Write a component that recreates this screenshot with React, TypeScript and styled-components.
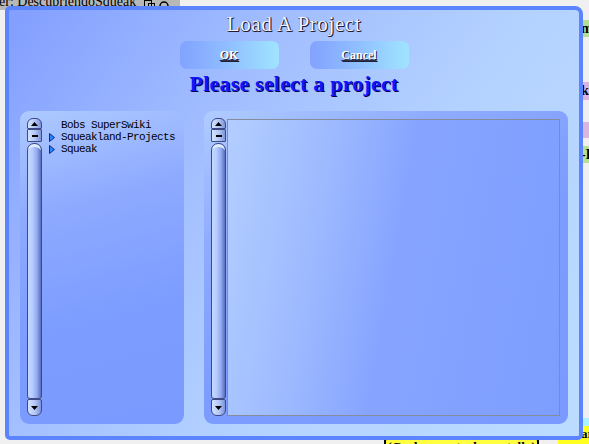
import styled, { createGlobalStyle } from "styled-components";

const GlobalStyle = createGlobalStyle`
  html, body {
    margin: 0;
    padding: 0;
    background: #f0f0f0;
  }
  #root {
    width: 589px;
    height: 444px;
  }
`;

const Desktop = styled.div`
  position: relative;
  width: 589px;
  height: 444px;
  overflow: hidden;
  background: #f0f0f0;
  font-family: "Liberation Serif", serif;
`;

// morphs lying behind the dialog on the Squeak desktop
const BackWindowBar = styled.div`
  position: absolute;
  left: 0;
  top: 0;
  width: 180px;
  height: 10px;
  background: #b8b8b8;
  overflow: hidden;
  display: flex;
  align-items: flex-start;
  gap: 8px;
`;
const BackWindowTitle = styled.span`
  margin-top: -5px;
  margin-left: -1px;
  font-size: 14px;
  line-height: 14px;
  color: #000;
  white-space: nowrap;
`;
const BarIcons = styled.span`
  display: flex;
  gap: 4px;
`;

const Flap = styled.div<{ $top: number; $height: number; $color: string }>`
  position: absolute;
  left: 576px;
  top: ${(p) => p.$top}px;
  width: 30px;
  height: ${(p) => p.$height}px;
  background: ${(p) => p.$color};
  font-size: 14px;
  font-weight: bold;
  line-height: ${(p) => p.$height}px;
  color: #000;
  padding-left: 5px;
  box-sizing: border-box;
  white-space: nowrap;
`;

const YellowLabel = styled.div`
  position: absolute;
  left: 384px;
  top: 437px;
  width: 155px;
  height: 20px;
  box-sizing: border-box;
  border: 2px solid #000;
  border-radius: 4px;
  background: #ffff40;
  font-size: 13px;
  font-weight: bold;
  line-height: 14px;
  padding-top: 1px;
  text-align: center;
  white-space: nowrap;
`;
const CyanBlob = styled.div`
  position: absolute;
  left: 556px;
  top: 418px;
  width: 40px;
  height: 16px;
  border-radius: 7px;
  background: #a8f4ff;
`;
const CornerYellow = styled.div`
  position: absolute;
  left: 558px;
  top: 426px;
  width: 40px;
  height: 24px;
  border-radius: 6px 0 0 0;
  background: #ffff20;
  font-size: 13px;
  font-weight: bold;
  line-height: 16px;
  padding-left: 23px;
  box-sizing: border-box;
`;

// the dialog
const Dialog = styled.div`
  position: absolute;
  left: 5px;
  top: 6px;
  width: 578px;
  height: 434px;
  box-sizing: border-box;
  border: 4px solid #5c84ff;
  border-radius: 5px 8px 5px 5px;
  background: linear-gradient(125deg, #829eff 0%, #a0bcff 30%, #b4d2ff 60%, #bcdcff 100%);
  display: flex;
  flex-direction: column;
  align-items: center;
  z-index: 2;
`;

const Title = styled.div`
  margin-top: 2px;
  height: 24px;
  line-height: 24px;
  font-family: "Liberation Serif", serif;
  font-size: 21px;
  letter-spacing: 0.6px;
  color: #f4f6ff;
  text-shadow: 1px 1px 0 #1c1c34, 1px 0 0 #3a3a5c, 0 1px 0 #3a3a5c;
`;

const ButtonRow = styled.div`
  display: flex;
  gap: 31px;
  margin-top: 5px;
`;

const DialogButton = styled.div`
  width: 99px;
  height: 28px;
  border-radius: 7px;
  background: linear-gradient(90deg, #82a2ff 0%, #90c0ff 50%, #a0e4ff 100%);
  display: flex;
  align-items: center;
  justify-content: center;
  font-family: "Liberation Serif", serif;
  font-size: 12px;
  font-weight: bold;
  color: #ffffff;
  text-decoration: underline;
  text-decoration-color: #30304a;
  text-underline-offset: 1px;
  text-shadow: 1px 1px 0 #20203a;
`;

const Heading = styled.div`
  margin-top: 3px;
  height: 24px;
  line-height: 24px;
  font-family: "Liberation Serif", serif;
  font-size: 22px;
  font-weight: bold;
  letter-spacing: 0.2px;
  color: #1414ff;
  text-shadow: 1px 1px 0 #000050;
`;

const Panels = styled.div`
  align-self: stretch;
  flex: 1;
  display: flex;
  gap: 20px;
  margin-top: 15px;
  padding: 0 11px 12px 11px;
`;

const Panel = styled.div<{ $wide?: boolean }>`
  ${(p) => (p.$wide ? "flex: 1;" : "width: 164px;")}
  border-radius: 9px;
  box-sizing: border-box;
  display: flex;
  padding: ${(p) => (p.$wide ? "7px 8px 8px 7px" : "7px 7px 8px 7px")};
  background: ${(p) =>
    p.$wide
      ? "linear-gradient(150deg, #b0ccff 0%, #90acff 25%, #7c9cff 55%, #7a9aff 100%)"
      : "linear-gradient(165deg, #aecaff 0%, #8eaaff 30%, #7c9cff 65%, #7a9aff 100%)"};
`;

// scrollbar
const Scroll = styled.div`
  width: 15px;
  display: flex;
  flex-direction: column;
`;
const ScrollButton = styled.div<{ $h: number; $round: string }>`
  height: ${(p) => p.$h}px;
  box-sizing: border-box;
  border: 1px solid #3e4a84;
  border-radius: ${(p) => p.$round};
  background: linear-gradient(90deg, #d4e4ff 0%, #b0c6f6 55%, #7e92d8 100%);
  display: flex;
  align-items: center;
  justify-content: center;
`;
const ScrollTrack = styled.div`
  flex: 1;
  box-sizing: border-box;
  margin-top: 1px;
  border: 1px solid #3e4a84;
  border-radius: 7px 7px 3px 3px;
  background: linear-gradient(90deg, #c4d8ff 0%, #b6ccff 35%, #90a8f0 70%, #5a6cb8 100%);
  box-shadow: inset 0 4px 0 -1px #e0ecff;
`;

function Scrollbar() {
  return (
    <Scroll>
      <ScrollButton $h={11} $round="6px 6px 1px 1px">
        <svg width="7" height="4" viewBox="0 0 7 4">
          <polygon points="3.5,0 7,4 0,4" fill="#000" />
        </svg>
      </ScrollButton>
      <ScrollButton $h={13} $round="1px">
        <svg width="6" height="2" viewBox="0 0 6 2">
          <rect width="6" height="2" fill="#000" />
        </svg>
      </ScrollButton>
      <ScrollTrack />
      <ScrollButton $h={17} $round="2px 2px 6px 6px">
        <svg width="7" height="4" viewBox="0 0 7 4">
          <polygon points="0,0 7,0 3.5,4" fill="#000" />
        </svg>
      </ScrollButton>
    </Scroll>
  );
}

const List = styled.div`
  flex: 1;
  padding: 1px 0 0 7px;
  display: flex;
  flex-direction: column;
`;
const ListRow = styled.div`
  height: 12px;
  display: flex;
  align-items: center;
  font-family: "Liberation Mono", monospace;
  font-size: 11px;
  letter-spacing: -0.6px;
  color: #000;
  white-space: nowrap;
`;
const Arrow = styled.span`
  width: 12px;
  display: flex;
  align-items: center;
`;

const ContentBox = styled.div`
  flex: 1;
  margin: 1px 0 0 1px;
  border: 1px solid #858c9c;
  background: linear-gradient(100deg, #b2ceff 0%, #a0bcff 25%, #86a4ff 50%, #7e9eff 100%);
`;

const entries = [
  { name: "Bobs SuperSwiki", expandable: false },
  { name: "Squeakland-Projects", expandable: true },
  { name: "Squeak", expandable: true },
];

export default function App() {
  return (
    <>
      <GlobalStyle />
      <Desktop>
        <BackWindowBar>
          <BackWindowTitle>er: DescubriendoSqueak</BackWindowTitle>
          <BarIcons>
            <svg width="11" height="10" viewBox="0 0 11 10">
              <rect x="0.5" y="0.5" width="7" height="7" fill="none" stroke="#000" />
              <rect x="4.5" y="3.5" width="6" height="6" fill="none" stroke="#000" />
            </svg>
            <svg width="10" height="10" viewBox="0 0 10 10">
              <circle cx="5" cy="6" r="4" fill="none" stroke="#000" strokeWidth="1.5" />
            </svg>
          </BarIcons>
        </BackWindowBar>

        <Flap $top={20} $height={17} $color="#b4e094">mn</Flap>
        <Flap $top={82} $height={18} $color="#dcb4e0">kk</Flap>
        <Flap $top={122} $height={16} $color="#dcb4e0" />
        <Flap $top={146} $height={17} $color="#b4e094">-E</Flap>

        <YellowLabel>(Grabar parte de pantalla)</YellowLabel>
        <CyanBlob />
        <CornerYellow>ar</CornerYellow>

        <Dialog>
          <Title>Load A Project</Title>
          <ButtonRow>
            <DialogButton>OK</DialogButton>
            <DialogButton>Cancel</DialogButton>
          </ButtonRow>
          <Heading>Please select a project</Heading>
          <Panels>
            <Panel>
              <Scrollbar />
              <List>
                {entries.map((e) => (
                  <ListRow key={e.name}>
                    <Arrow>
                      {e.expandable && (
                        <svg width="6" height="9" viewBox="0 0 6 9">
                          <polygon points="0.5,0.5 5.5,4.5 0.5,8.5" fill="#2a86ff" stroke="#0a2a90" strokeWidth="1" />
                        </svg>
                      )}
                    </Arrow>
                    {e.name}
                  </ListRow>
                ))}
              </List>
            </Panel>
            <Panel $wide>
              <Scrollbar />
              <ContentBox />
            </Panel>
          </Panels>
        </Dialog>
      </Desktop>
    </>
  );
}
